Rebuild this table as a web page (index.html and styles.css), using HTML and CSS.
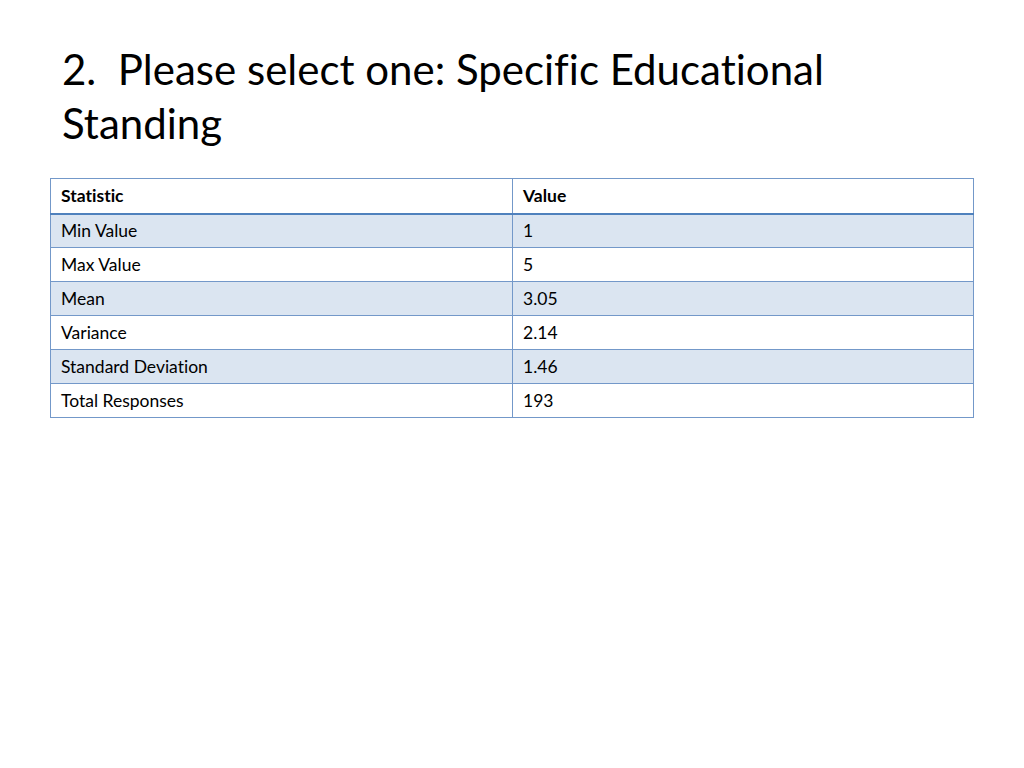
FILE: index.html
```html
<!DOCTYPE html>
<html>
<head>
<meta charset="utf-8">
<link rel="stylesheet" href="styles.css">
</head>
<body>
<div class="slide">
  <h1 class="title">2.&nbsp; Please select one: Specific Educational Standing</h1>
  <table class="stats">
    <thead>
      <tr><th>Statistic</th><th>Value</th></tr>
    </thead>
    <tbody>
      <tr class="odd"><td>Min Value</td><td>1</td></tr>
      <tr><td>Max Value</td><td>5</td></tr>
      <tr class="odd"><td>Mean</td><td>3.05</td></tr>
      <tr><td>Variance</td><td>2.14</td></tr>
      <tr class="odd"><td>Standard Deviation</td><td>1.46</td></tr>
      <tr><td>Total Responses</td><td>193</td></tr>
    </tbody>
  </table>
</div>
</body>
</html>
```

FILE: styles.css
```css
html, body {
  margin: 0;
  padding: 0;
  background: #ffffff;
}
.slide {
  width: 1024px;
  height: 768px;
  box-sizing: border-box;
  padding: 42px 50px 0 50px;
  font-family: Lato, "Open Sans", sans-serif;
  font-variant-ligatures: none;
  color: #000;
}
.title {
  margin: 0 0 0 12px;
  font-weight: normal;
  font-size: 42px;
  line-height: 54px;
  width: 800px;
}
.stats {
  margin-top: 28px;
  width: 924px;
  border-collapse: collapse;
  font-size: 17.5px;
}
.stats th, .stats td {
  border: 1px solid #7398c9;
  height: 34px;
  padding: 0 10px;
  text-align: left;
  box-sizing: border-box;
}
.stats th {
  font-weight: bold;
  height: 35px;
  font-size: 17.5px;
  border-bottom: 2px solid #4f81bd;
}
.stats th:first-child, .stats td:first-child {
  width: 462px;
}
.stats tr.odd td {
  background: #dbe5f1;
}
```
